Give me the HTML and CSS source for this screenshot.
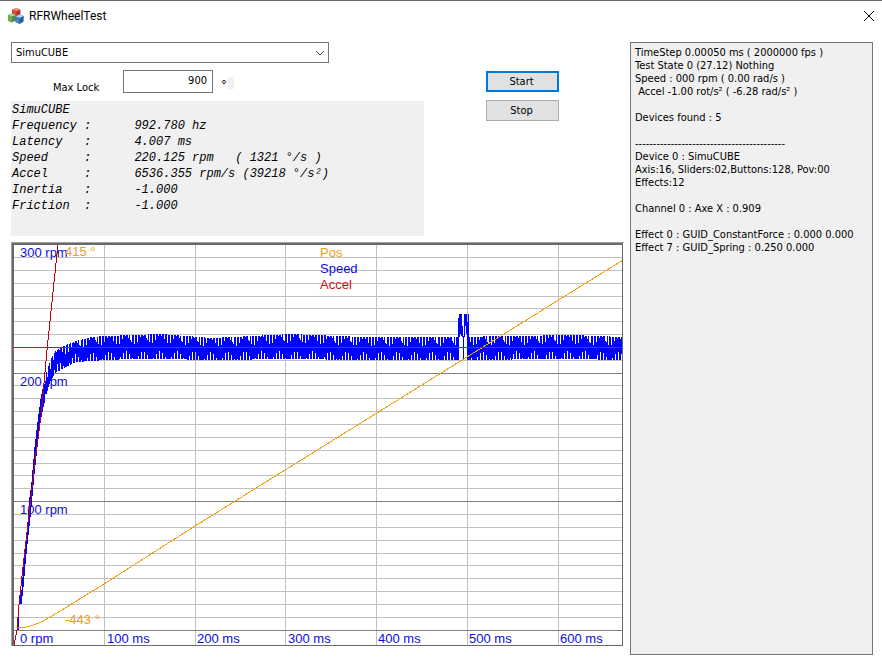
FILE: index.html
```html
<!DOCTYPE html>
<html lang="en">
<head>
    <meta charset="UTF-8">
    <meta name="viewport" content="width=device-width, initial-scale=1.0">
    <title>RFRWheelTest</title>
    <link rel="stylesheet" href="styles.css">
</head>
<body>
    <header class="titlebar">
        <svg class="app-icon" viewBox="0 0 16 16" aria-hidden="true">
            <path d="M4 1.6 8.5 0 12.5 1.4 12.3 6.6 8.4 8.4 4.2 6.8Z" fill="#b8332a"/>
            <path d="M4 1.6 8.5 0 12.5 1.4 8.4 3Z" fill="#ee9a8a"/>
            <path d="M4 1.6 8.4 3 8.4 8.4 4.2 6.8Z" fill="#d9503f"/>
            <path d="M0 7 3.8 5.4 7.8 6.9 7.6 12.6 3.9 14.6 0.2 12.8Z" fill="#4d8c35"/>
            <path d="M0 7 3.8 5.4 7.8 6.9 4 8.6Z" fill="#b4d89c"/>
            <path d="M0 7 4 8.6 3.9 14.6 0.2 12.8Z" fill="#71ad50"/>
            <path d="M7.2 8.2 11.6 6.7 15.8 8.1 15.5 13.8 11.6 16 7.4 14Z" fill="#255a9c"/>
            <path d="M7.2 8.2 11.6 6.7 15.8 8.1 11.6 9.9Z" fill="#b3d4ee"/>
            <path d="M7.2 8.2 11.6 9.9 11.6 16 7.4 14Z" fill="#4584c0"/>
        </svg>
        <h1>RFRWheelTest</h1>
        <button type="button" class="close" aria-label="Close">
            <svg viewBox="0 0 12 12"><path d="M1 1 11 11M11 1 1 11"/></svg>
        </button>
    </header>

    <main class="layout">
        <section class="left">
            <div class="controls">
                <div class="settings">
                    <div class="select-wrap">
                        <select id="device" aria-label="Device">
                            <option>SimuCUBE</option>
                        </select>
                        <svg class="chevron" viewBox="0 0 10 6"><path d="M1 1 5 5 9 1"/></svg>
                    </div>
                    <div class="lock-row">
                        <label for="maxLock">Max Lock</label>
                        <input type="text" id="maxLock" value="900">
                        <span class="degree">°</span>
                        <span class="unit-box"></span>
                    </div>
                    <pre class="results">SimuCUBE
Frequency :      992.780 hz
Latency   :      4.007 ms
Speed     :      220.125 rpm   ( 1321 °/s )
Accel     :      6536.355 rpm/s (39218 °/s²)
Inertia   :      -1.000
Friction  :      -1.000</pre>
                </div>
                <div class="buttons">
                    <button type="button" class="btn default">Start</button>
                    <button type="button" class="btn">Stop</button>
                </div>
            </div>

            <svg class="chart" id="chart" viewBox="0 0 613 404" role="img" aria-label="Position, speed and acceleration over time">
                <g id="grid"></g>
                <g class="axis">
                    <text x="9" y="15">300 rpm</text>
                    <text x="9" y="144">200 rpm</text>
                    <text x="9" y="272">100 rpm</text>
                    <text x="9" y="401">0 rpm</text>
                    <text x="96" y="401">100 ms</text>
                    <text x="186" y="401">200 ms</text>
                    <text x="277" y="401">300 ms</text>
                    <text x="367" y="401">400 ms</text>
                    <text x="458" y="401">500 ms</text>
                    <text x="549" y="401">600 ms</text>
                </g>
                <path id="speed" class="speed-line"/>
                <path class="pos-line" d="M7 386C14 386 20 384 28 381C43 374 63 360 93 342L184 284 612 18"/>
                <path class="accel-line" d="M3 403 6 388 8 363 11 334 16 290 20 256 24 218 30 174 36 108 47 2"/>
                <rect class="accel-level" x="2" y="105" width="610" height="1"/>
                <g class="pos-text">
                    <text x="54" y="14">415 °</text>
                    <text x="54" y="382">-443 °</text>
                    <text x="309" y="15">Pos</text>
                </g>
                <text class="speed-text" x="309" y="31">Speed</text>
                <text class="accel-text" x="309" y="47">Accel</text>
                <g class="frame">
                    <rect class="outer" width="613" height="1"/>
                    <rect class="outer" width="1" height="404"/>
                    <rect x="1" y="1" width="611" height="2"/>
                    <rect x="1" y="1" width="2" height="403"/>
                    <rect x="611" y="1" width="1" height="403"/>
                    <rect x="1" y="403" width="611" height="1"/>
                </g>
            </svg>
        </section>

        <pre class="log">TimeStep 0.00050 ms ( 2000000 fps )
Test State 0 (27.12) Nothing
Speed : 000 rpm ( 0.00 rad/s )
 Accel -1.00 rot/s² ( -6.28 rad/s² )

Devices found : 5

------------------------------------------
Device 0 : SimuCUBE
Axis:16, Sliders:02,Buttons:128, Pov:00
Effects:12

Channel 0 : Axe X : 0.909

Effect 0 : GUID_ConstantForce : 0.000 0.000
Effect 7 : GUID_Spring : 0.250 0.000</pre>
    </main>

    <script src="chart.js"></script>
</body>
</html>
```
FILE: styles.css
```css
body {
    margin: 0;
    min-height: 100vh;
    box-sizing: border-box;
    display: flex;
    flex-direction: column;
    background-color: #ffffff;
    border-top: 1px solid #6b686b;
    color: #000;
    font-family: "DejaVu Sans Condensed", "DejaVu Sans", sans-serif;
    font-size: 11px;
}

.titlebar {
    display: flex;
    align-items: center;
    height: 29px;
    padding: 0 7px 0 8px;
}

.app-icon {
    width: 16px;
    height: 16px;
}

h1 {
    flex: 1;
    margin: 0 0 0 5px;
    font-family: Roboto, sans-serif;
    font-size: 12px;
    font-weight: 400;
}

.close {
    display: flex;
    padding: 0;
    border: none;
    background: none;
}

.close svg {
    width: 12px;
    height: 12px;
    stroke: #000;
    fill: none;
}

.layout {
    flex: 1;
    display: flex;
    gap: 6px;
    padding: 12px 9px 9px 11px;
}

.left {
    flex: 1;
    min-width: 0;
}

.controls {
    display: flex;
    align-items: flex-start;
}

.settings {
    flex: 0 0 413px;
}

.select-wrap {
    position: relative;
    width: 318px;
}

select {
    appearance: none;
    display: block;
    width: 100%;
    height: 21px;
    padding: 0 4px;
    border: 1px solid #767676;
    border-radius: 0;
    background-color: #fff;
    color: #000;
    font: inherit;
}

.chevron {
    position: absolute;
    right: 4px;
    top: 8px;
    width: 10px;
    height: 6px;
    fill: none;
    stroke: #444;
    pointer-events: none;
}

.lock-row {
    display: flex;
    align-items: flex-start;
    height: 23px;
    margin: 7px 0 8px;
}

.lock-row label {
    width: 70px;
    padding: 11px 0 0 42px;
    line-height: 14px;
}

.lock-row input {
    box-sizing: border-box;
    width: 90px;
    height: 23px;
    padding: 0 5px 2px;
    border: 1px solid #767676;
    font: inherit;
    text-align: right;
}

.degree {
    width: 7px;
    padding: 7px 0 0 8px;
    font-size: 13px;
}

.unit-box {
    width: 6px;
    height: 12px;
    margin-top: 7px;
    background-color: #f0f0f0;
}

.results {
    height: 135px;
    box-sizing: border-box;
    margin: 0 0 6px;
    padding: 1px;
    background-color: #f0f0f0;
    font-family: "Liberation Mono", monospace;
    font-size: 12px;
    font-style: italic;
    line-height: 16px;
}

.buttons {
    display: flex;
    flex-direction: column;
    gap: 8px;
    margin: 29px 0 0 62px;
}

.btn {
    width: 73px;
    height: 21px;
    padding: 0 2px 0 0;
    border: 1px solid #adadad;
    background-color: #e1e1e1;
    color: #000;
    font: inherit;
}

.btn.default {
    border: 2px solid #0078d7;
}

.chart {
    display: block;
    width: 100%;
    height: auto;
    font-family: "Liberation Sans", Arial, sans-serif;
    font-size: 13px;
}

.chart path {
    fill: none;
    shape-rendering: crispEdges;
}

.chart rect {
    shape-rendering: crispEdges;
}

.minor {
    stroke: #c0c0c0;
}

.major {
    stroke: #808080;
}

.axis,
.speed-text {
    fill: #0c0cdc;
}

.pos-text {
    fill: #f0a010;
}

.accel-text {
    fill: #d01010;
}

.speed-line {
    stroke: #0000ff;
}

.pos-line {
    stroke: #f0a010;
}

.accel-line {
    stroke: #c00010;
}

.accel-level {
    fill: #cc1020;
}

.frame {
    fill: #696969;
}

.frame .outer {
    fill: #a0a0a0;
}

.log {
    flex: 0 0 243px;
    box-sizing: border-box;
    margin: 0;
    padding: 3px 4px;
    border: 1px solid #767676;
    background-color: #f0f0f0;
    font-family: inherit;
    line-height: 13px;
}
```
FILE: chart.js
```javascript
// Grid: a minor line every 10 rpm, a major one every 100 rpm, a column every 100 ms
let minor = '';
let major = '';
for (let i = 0; i < 30; i++) {
    const y = Math.floor(388.1 - i * 12.85) + 0.5;
    if (i % 10 === 0) {
        major += `M2 ${y}H612`;
    } else {
        minor += `M2 ${y}H612`;
    }
}
for (let i = 1; i < 7; i++) {
    minor += `M${Math.round(2.3 + i * 90.7) + 0.5} 2V403`;
}
document.getElementById('grid').innerHTML =
    `<path class="minor" d="${minor}"/><path class="major" d="${major}"/>`;

// Speed envelope: x, top, bottom
const envelope = [
    [7, 370, 388], [8, 358, 362], [10, 348, 362], [12, 322, 345], [14, 300, 322],
    [16, 280, 302], [18, 255, 284], [20, 240, 265], [23, 205, 232], [26, 180, 205],
    [29, 157, 180], [32, 142, 165], [35, 130, 152], [39, 118, 139], [44, 109, 131],
    [52, 104, 126], [65, 99, 120], [80, 95, 119], [95, 94, 118], [120, 93, 117],
    [150, 92, 117], [200, 96, 118], [280, 92, 117], [350, 95, 118], [440, 95, 118],
    [560, 93, 117], [612, 95, 118]
];

// Short overshoot just before 500 ms: top and bottom of each column
const spikeStart = 447;
const spike = [
    [76, 118], [72, 95], [72, 92], [72, 94], [84, 95], [94, 118],
    [72, 95], [72, 84], [72, 92], [80, 118], [72, 118]
];

function range(x) {
    let i = 1;
    while (i < envelope.length - 1 && envelope[i][0] < x) i++;
    const a = envelope[i - 1];
    const b = envelope[i];
    const t = (x - a[0]) / (b[0] - a[0]);
    return [a[1] + (b[1] - a[1]) * t, a[2] + (b[2] - a[2]) * t];
}

let d = '';
for (let x = 7; x < 612; x++) {
    let [top, bottom] = range(x);
    if (x > 32) {
        const notch = 5 + 4 * Math.sin(x * 0.37);
        if (x % 3 === 0 || x % 17 === 0) top += notch;
        if (x % 3 === 1) bottom -= 9 - notch;
    }
    const s = spike[x - spikeStart];
    if (s) [top, bottom] = s;
    d += `M${x}.5 ${Math.round(top)}V${Math.round(bottom)}`;
}
document.getElementById('speed').setAttribute('d', d);
```
